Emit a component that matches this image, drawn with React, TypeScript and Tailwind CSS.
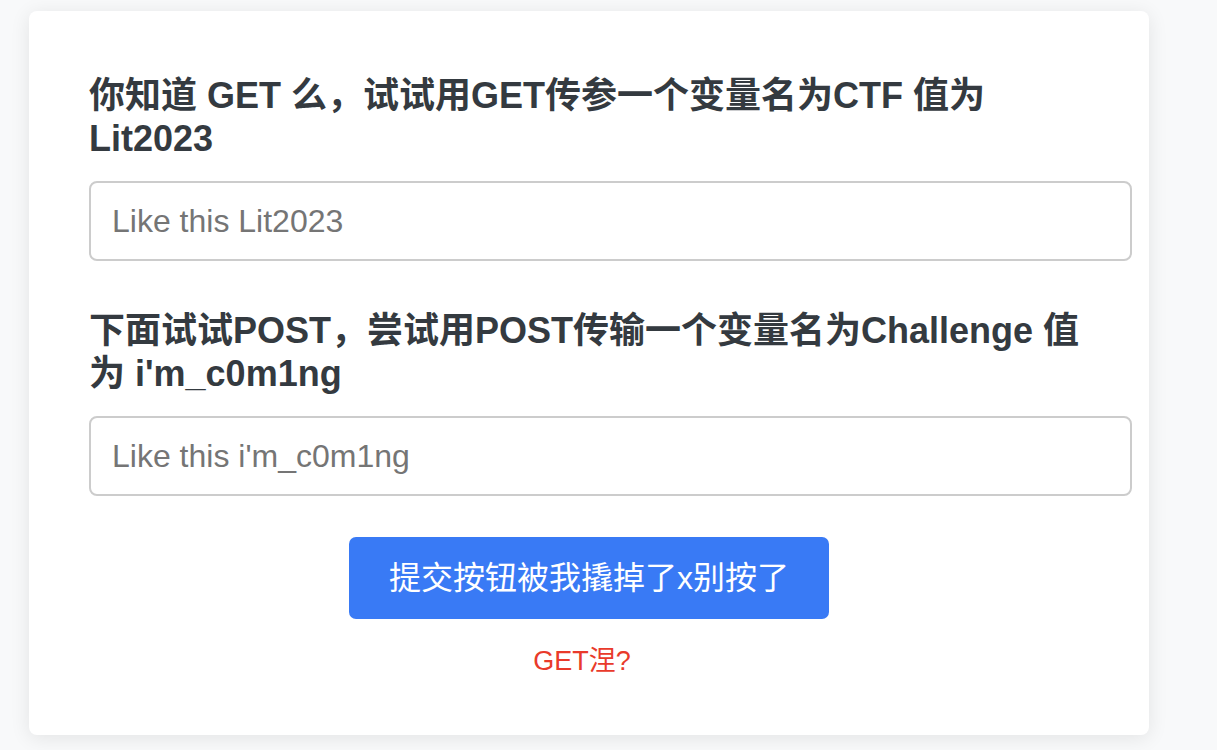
import React from "react";

export default function App() {
  const font = "font-['Liberation_Sans','Noto_Sans_CJK_SC',sans-serif]";
  return (
    <div className={`min-h-screen bg-[#f8f9fa] pt-[11px] pl-[29px] ${font}`}>
      <div className="w-[1120px] h-[724px] bg-white rounded-[8px] shadow-[0_3px_20px_rgba(0,0,0,0.09)] pl-[60px] pt-[63px]">
        <h2 className="w-[1000px] text-[36px] font-bold leading-[43px] text-[#343a40]">
          你知道 GET 么，试试用GET传参一个变量名为CTF 值为 Lit2023
        </h2>
        <input
          type="text"
          placeholder="Like this Lit2023"
          className="mt-[21px] block w-[1043px] h-[80px] border-2 border-[#cccccc] rounded-[8px] px-[21px] text-[32px] text-[#333] placeholder:text-[#757575] outline-none bg-white"
        />
        <h2 className="mt-[48px] w-[1000px] text-[36px] font-bold leading-[43px] text-[#343a40]">
          下面试试POST，尝试用POST传输一个变量名为Challenge 值为 i'm_c0m1ng
        </h2>
        <input
          type="text"
          placeholder="Like this i'm_c0m1ng"
          className="mt-[21px] block w-[1043px] h-[80px] border-2 border-[#cccccc] rounded-[8px] px-[21px] text-[32px] text-[#333] placeholder:text-[#757575] outline-none bg-white"
        />
        <div className="w-[1000px] flex flex-col items-center mt-[41px]">
          <button className="w-[480px] h-[82px] bg-[#397af5] rounded-[7px] text-white text-[32px] flex items-center justify-center">
            提交按钮被我撬掉了x别按了
          </button>
          <p className="mt-[27px] text-[27px] leading-[31px] text-[#e93a2b] -ml-[14px]">GET涅?</p>
        </div>
      </div>
    </div>
  );
}
